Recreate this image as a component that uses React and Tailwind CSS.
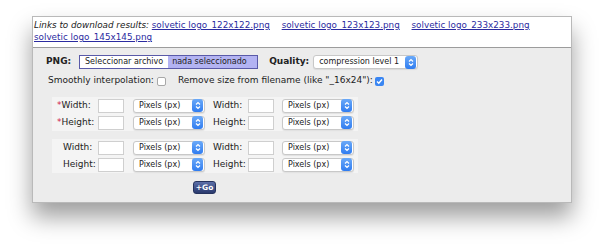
import React from "react";

const Stepper = () => (
  <span className="flex h-[13px] w-[11px] flex-col items-center justify-center rounded-[3px] bg-gradient-to-b from-[#6aa9f8] to-[#2f7cf0]">
    <svg width="6" height="9" viewBox="0 0 6 9" fill="none" stroke="white" strokeWidth="1.2">
      <path d="M1 3.5 L3 1.5 L5 3.5" />
      <path d="M1 5.5 L3 7.5 L5 5.5" />
    </svg>
  </span>
);

const Select = ({ label, w }) => (
  <div
    className={`flex h-[14px] items-center justify-between rounded-[3px] border border-[#c8c8c8] bg-white pl-[5px] pr-[1px] shadow-[0_1px_1px_rgba(0,0,0,0.08)] ${w}`}
  >
    <span className="text-[8px] leading-none text-[#222]">{label}</span>
    <Stepper />
  </div>
);

const Box = () => <div className="h-[14px] w-[26px] border border-[#cfcfcf] bg-white" />;

const SizeRow = ({ first, second, star }) => (
  <div className="flex h-[17px] items-center">
    <div className={`w-[41px] text-[9px] text-[#222] ${star ? "" : "pl-[6px]"}`}>
      {star && <span className="text-[#d0234a]">*</span>}
      {first}:
    </div>
    <Box />
    <div className="w-[9px]" />
    <Select label="Pixels (px)" w="w-[72px]" />
    <div className="w-[8px] shrink-0" />
    <div className="w-[35px] text-[9px] text-[#222]">{second}:</div>
    <Box />
    <div className="w-[8px]" />
    <Select label="Pixels (px)" w="w-[72px]" />
  </div>
);

export default function App() {
  return (
    <div className="h-[248px] w-[600px] overflow-hidden bg-white pt-[16px] pl-[32px] font-['DejaVu_Sans',sans-serif]">
      <div className="w-[540px] border border-[#b9b9b9] bg-[#ececec] shadow-[0_14px_22px_rgba(0,0,0,0.38)]">
        <div className="border-b border-[#9c9c9c] bg-white px-[1px] pt-[2px] pb-[4px] text-[8.8px] leading-[12px]">
          <span className="italic text-[#222]">Links to download results: </span>
          <a className="text-[#2b2ba0] underline">solvetic logo_122x122.png</a>
          <span className="mr-[9px]"> </span>
          <a className="text-[#2b2ba0] underline">solvetic logo_123x123.png</a>
          <span className="mr-[9px]"> </span>
          <a className="text-[#2b2ba0] underline">solvetic logo_233x233.png</a>
          <br />
          <a className="text-[#2b2ba0] underline">solvetic logo_145x145.png</a>
        </div>

        <div className="pt-[7px] pb-[8px]">
          <div className="flex h-[14px] items-center pl-[13px]">
            <span className="text-[9px] font-bold text-[#222]">PNG:</span>
            <div className="ml-[8px] flex h-[14px] w-[179px] border border-[#5a5aa8] text-[8px] leading-none">
              <span className="flex w-[88px] items-center justify-center bg-white text-[#222]">Seleccionar archivo</span>
              <span className="flex flex-1 items-center pl-[4px] bg-[#b3b3f2] text-[#222]">nada seleccionado</span>
            </div>
            <span className="ml-[11px] text-[9px] font-bold text-[#222]">Quality:</span>
            <div className="ml-[4px]">
              <Select label="compression level 1" w="w-[105px]" />
            </div>
          </div>

          <div className="mt-[5px] flex h-[14px] items-center pl-[15px] text-[9px] text-[#222]">
            <span>Smoothly interpolation:</span>
            <span className="ml-[3px] h-[9px] w-[9px] rounded-[2px] border border-[#a8a8a8] bg-white" />
            <span className="ml-[12px]">Remove size from filename (like "_16x24"):</span>
            <span className="ml-[2px] flex h-[9px] w-[9px] items-center justify-center rounded-[2px] bg-[#3a86f2]">
              <svg width="7" height="7" viewBox="0 0 7 7" fill="none" stroke="white" strokeWidth="1.4">
                <path d="M1 3.5 L2.8 5.3 L6 1.5" />
              </svg>
            </span>
          </div>

          <div className="ml-[19px] mt-[9px] w-[306px] bg-[#f4f4f4] pl-[5px]">
            <SizeRow first="Width" second="Width" star />
            <SizeRow first="Height" second="Height" star />
          </div>
          <div className="ml-[19px] mt-[8px] w-[306px] bg-[#f4f4f4] pl-[5px]">
            <SizeRow first="Width" second="Width" />
            <SizeRow first="Height" second="Height" />
          </div>

          <div className="mt-[8px] flex pl-[160px]">
            <button className="flex h-[13px] w-[23px] items-center justify-center rounded-[3px] border border-[#26335e] bg-gradient-to-b from-[#5c6fa8] to-[#2b3a6e] text-[7.5px] font-bold leading-none text-white">
              +Go
            </button>
          </div>
        </div>
      </div>
    </div>
  );
}
